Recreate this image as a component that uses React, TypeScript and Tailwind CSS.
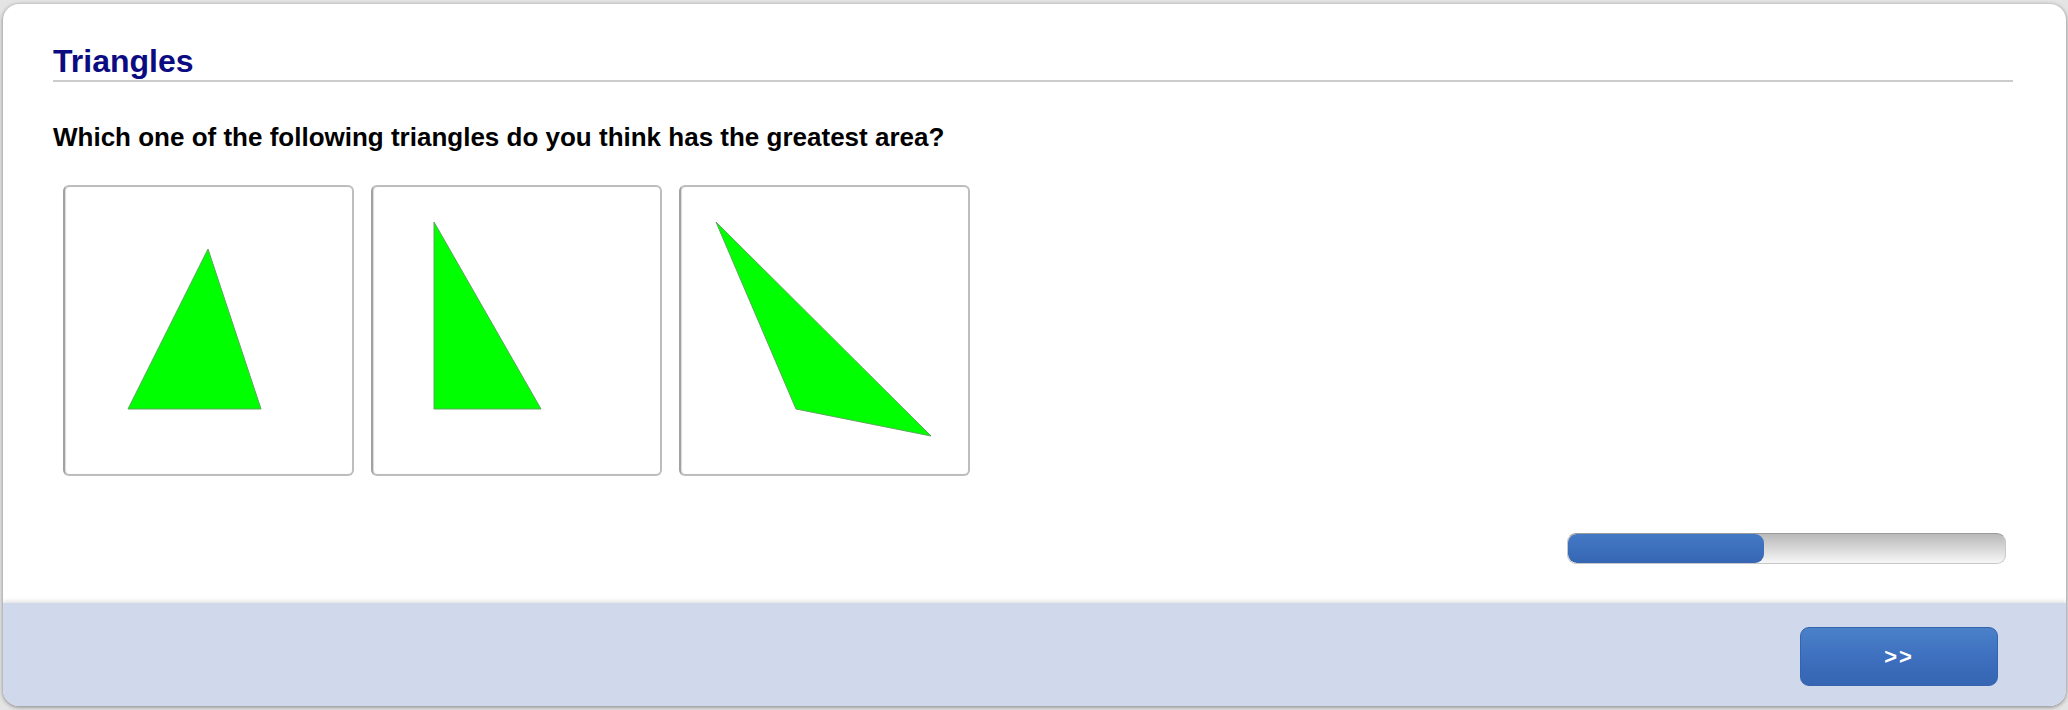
const triangles: string[] = [
  '143,62 63,222 196,222',
  '61,35 61,222 168,222',
  '35,35 115,222 250,249',
];

function TriangleChoice({ points }: { points: string }) {
  return (
    <button className="w-[291px] h-[291px] shrink-0 rounded-[6px] border-2 border-[#bdbdbd] border-l-[#a2a2a2] bg-white shadow-[inset_1px_0_1px_rgba(0,0,0,0.15)] p-0">
      <svg width="287" height="287" viewBox="0 0 287 287" className="block">
        <polygon points={points} fill="#00ff00" stroke="#5aa85a" strokeWidth="1" strokeLinejoin="round" />
      </svg>
    </button>
  );
}

export default function App() {
  return (
    <div className="w-[2068px] h-[710px] bg-[#e4e4e4] pt-[4px] pl-[3px] pr-[2px] pb-[4px] font-['Liberation_Sans',Arial,sans-serif]">
      <div className="h-full flex flex-col rounded-[16px] bg-white overflow-hidden shadow-[0_1px_4px_rgba(0,0,0,0.45)]">
        <div className="flex-1 flex flex-col pl-[50px] pr-[53px] pt-[39px]">
          <h1 className="text-[32px] leading-[36px] font-bold text-[#0b0b82] pb-[1px] border-b-2 border-[#cccccc]">
            Triangles
          </h1>
          <p className="mt-[40px] text-[26px] leading-[30px] font-bold text-black">
            Which one of the following triangles do you think has the greatest area?
          </p>
          <div className="mt-[33px] ml-[10px] flex gap-[17px]">
            {triangles.map((p) => (
              <TriangleChoice key={p} points={p} />
            ))}
          </div>
          <div className="mt-[57px] self-end mr-[7px] w-[439px] h-[31px] rounded-[9px] border border-[#c8c8c8] border-t-[#9a9a9a] bg-gradient-to-b from-[#b9b9b9] to-[#f7f7f7] overflow-hidden">
            <div className="h-full w-[196px] rounded-[9px] bg-gradient-to-b from-[#4479c6] to-[#3566b3]" />
          </div>
        </div>
        <div className="h-[103px] bg-[#cfd9eb] shadow-[0_-2px_4px_rgba(0,0,0,0.12)] flex justify-end items-start pt-[24px] pr-[68px]">
          <button className="w-[198px] h-[59px] rounded-[9px] border border-[#3564ad] bg-gradient-to-b from-[#4a81c9] via-[#3e70bf] to-[#3565b3] text-white text-[22px] font-bold tracking-[2px]">
            &gt;&gt;
          </button>
        </div>
      </div>
    </div>
  );
}
